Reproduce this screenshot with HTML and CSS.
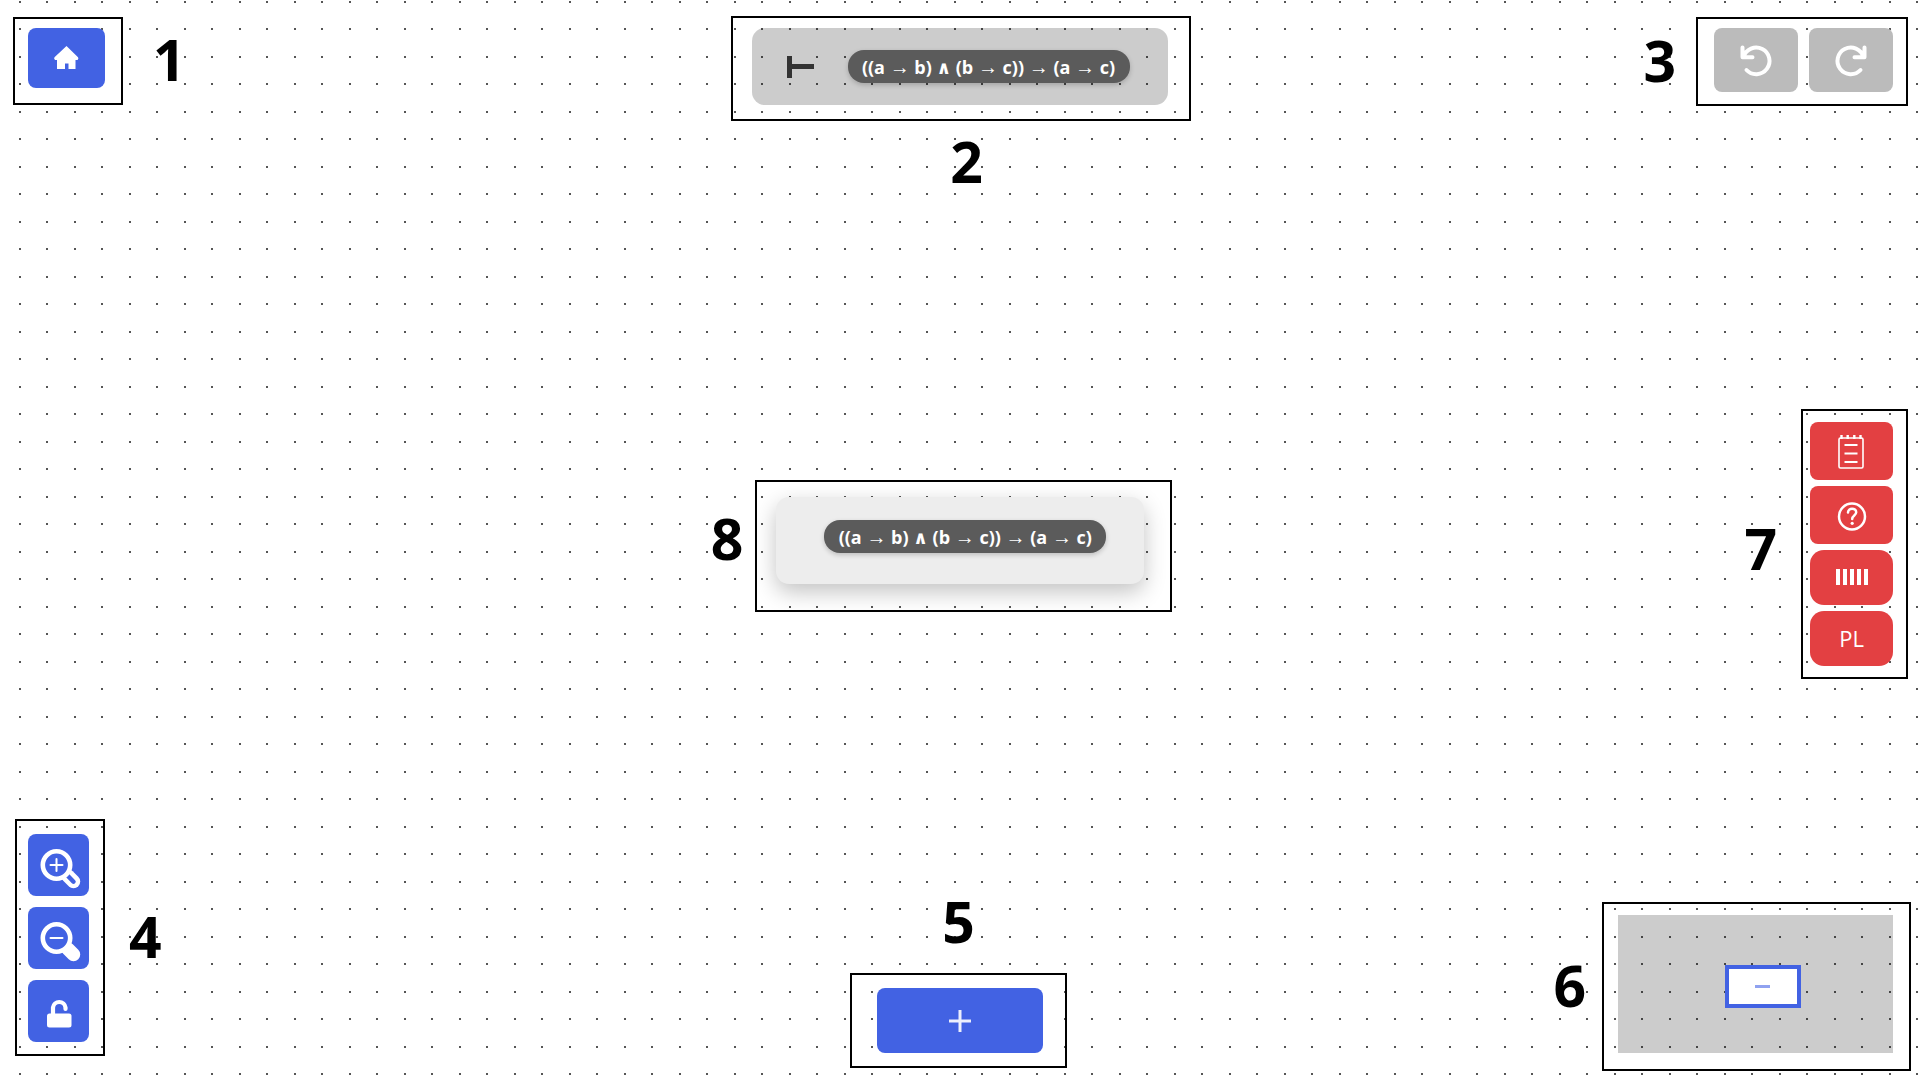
FILE: index.html
```html
<!DOCTYPE html>
<html lang="en">
<head>
<meta charset="utf-8">
<meta name="viewport" content="width=device-width, initial-scale=1">
<title>Proof editor overview</title>
<link rel="stylesheet" href="styles.css">
</head>
<body>
<main class="canvas">
  <div class="row row-top">
    <figure class="figure gap-wide">
      <div class="frame frame-home">
        <button class="btn btn-home" type="button" aria-label="Home">
          <svg width="26" height="24" viewBox="0 0 26 24" fill="#fff"><path d="M12.500 0 24 11.300Q25 12.500 23.600 14H21.500V23H14.500V17.500H11V23H3V14H1Q-.5 12.500 .5 11.300Z"/></svg>
        </button>
      </div>
      <figcaption class="number">1</figcaption>
    </figure>
    <figure class="figure figure-column">
      <div class="frame frame-goal">
        <div class="goal">
          <svg class="turnstile" width="27" height="22" viewBox="0 0 27 22" fill="#333" role="img" aria-label="proves"><path d="M0 0H5V8H27V13H5V22H0Z"/></svg>
          <span class="formula">((a <i>→</i> b) <i class="and">∧</i> (b <i>→</i> c)) <i>→</i> (a <i>→</i> c)</span>
        </div>
      </div>
      <figcaption class="number number-below">2</figcaption>
    </figure>
    <figure class="figure gap-medium">
      <figcaption class="number">3</figcaption>
      <div class="frame frame-history">
        <button class="btn btn-history" type="button" aria-label="Undo">
          <svg width="32" height="32" viewBox="0 0 32 32" class="stroke"><path d="M2.500 3.500V13.300H12.500M3.500 13A13.300 13.300 0 1 1 6.500 26"/></svg>
        </button>
        <button class="btn btn-history" type="button" aria-label="Redo">
          <svg width="32" height="32" viewBox="0 0 32 32" class="stroke"><path d="M29.500 3.500V13.300H19.500M28.500 13A13.300 13.300 0 1 0 25.500 26"/></svg>
        </button>
      </div>
    </figure>
  </div>

  <div class="row row-middle">
    <figure class="figure figure-node gap-narrow">
      <figcaption class="number number-raised">8</figcaption>
      <div class="frame frame-node">
        <div class="node"><span class="formula">((a <i>→</i> b) <i class="and">∧</i> (b <i>→</i> c)) <i>→</i> (a <i>→</i> c)</span></div>
      </div>
    </figure>
    <figure class="figure gap-regular">
      <figcaption class="number number-lowered">7</figcaption>
      <div class="frame frame-tools">
        <button class="btn btn-tool" type="button" aria-label="Rules">
          <svg width="26" height="34" viewBox="1 -1 26 34" fill="none" stroke="#fff"><rect x="1" y="3" width="24" height="30" rx="1.500" stroke-width="1.600"/><path d="M3.500 0V4M9.700 0V4M16.300 0V4M22.500 0V4" stroke-width="2.400"/><path d="M6.500 10H19.500M6.500 18.500H19.500M6.500 27H19.500" stroke-width="2"/></svg>
        </button>
        <button class="btn btn-tool" type="button" aria-label="Help">
          <svg width="30" height="30" viewBox="0 -1 30 30" fill="none" stroke="#fff" stroke-width="2.500" stroke-linecap="round"><circle cx="15" cy="15.500" r="13"/><path d="M11 11.500C11 6.500 19.200 6.500 19.200 11.300C19.200 14.500 15.200 14.500 15.200 18"/><circle cx="15.200" cy="22.300" r="1.600" fill="#fff" stroke="none"/></svg>
        </button>
        <button class="btn btn-tool btn-round" type="button" aria-label="Toggle bars">
          <svg width="32" height="16" viewBox="0 0 32 16" fill="#fff"><path d="M0 0h4v16h-4zM7 0h4v16h-4zM14 0h4v16h-4zM21 0h4v16h-4zM28 0h4v16h-4z"/></svg>
        </button>
        <button class="btn btn-tool btn-round" type="button">PL</button>
      </div>
    </figure>
  </div>

  <div class="row row-bottom">
    <figure class="figure figure-zoom gap-regular">
      <div class="frame frame-zoom">
        <button class="btn btn-square" type="button" aria-label="Zoom in">
          <svg width="44" height="44" viewBox="1 0 44 44" class="lens"><path d="M32 33 37.500 38.500" stroke="#fff" stroke-width="13.500"/><path d="M31.500 32.500 37.500 38.700" stroke="#4262e3" stroke-width="4.500"/><circle cx="20.500" cy="22" r="13.700" fill="#4262e3" stroke="#fff" stroke-width="4.600"/><path d="M14.500 22H26.500M20.500 16V28" stroke="#fff" stroke-width="2"/></svg>
        </button>
        <button class="btn btn-square" type="button" aria-label="Zoom out">
          <svg width="44" height="44" viewBox="1 0 44 44" class="lens"><path d="M32 33 37.500 38.500" stroke="#fff" stroke-width="13.500"/><circle cx="20.500" cy="22" r="13.700" fill="#4262e3" stroke="#fff" stroke-width="4.600"/><path d="M14.500 22H26.500" stroke="#fff" stroke-width="2"/></svg>
        </button>
        <button class="btn btn-square" type="button" aria-label="Unlock">
          <svg width="26" height="34" viewBox="0 0 26 34"><rect x="1" y="19.500" width="24.500" height="14" rx="2.500" fill="#fff"/><path d="M7 21V13.500A6.300 6.300 0 0 1 19.500 13.500V15" fill="none" stroke="#fff" stroke-width="4.200" stroke-linecap="round"/></svg>
        </button>
      </div>
      <figcaption class="number">4</figcaption>
    </figure>
    <figure class="figure figure-column figure-add">
      <figcaption class="number number-above">5</figcaption>
      <div class="frame frame-add">
        <button class="btn btn-add" type="button" aria-label="Add node">
          <svg width="22" height="22" viewBox="0 0 22 22" fill="#fff" opacity=".9"><path d="M9.500 0h3v9.500H22v3H12.500V22h-3V12.500H0v-3H9.500z"/></svg>
        </button>
      </div>
    </figure>
    <figure class="figure gap-small">
      <figcaption class="number">6</figcaption>
      <div class="frame frame-map">
        <div class="map"><div class="viewport"><div class="map-node"></div></div></div>
      </div>
    </figure>
  </div>
</main>
</body>
</html>
```
FILE: styles.css
```css
* {
  box-sizing: border-box;
}

body {
  margin: 0;
  font-family: "Open Sans", "Noto Sans", sans-serif;
  color: #000;
}

/* Dots repeat every 55px in pairs, four per tile */
.canvas {
  --dot: radial-gradient(circle at 1px 1px, #555 1px, transparent 1px);
  display: grid;
  grid-template-rows: 1fr auto 1fr;
  min-height: 100vh;
  padding: 16px 11px 8px 13px;
  background-color: #fff;
  background-image: var(--dot), var(--dot), var(--dot), var(--dot);
  background-size: 55px 55px;
  background-position: 19px 1px, 46px 1px, 19px 28px, 46px 28px;
}

.row {
  display: grid;
  grid-template-columns: 1fr auto 1fr;
}

.row-top {
  align-items: start;
}

.row-middle {
  align-items: center;
}

.row-bottom {
  align-items: end;
}

.row > :last-child {
  justify-self: end;
}

.figure {
  display: flex;
  align-items: center;
  margin: 0;
}

.figure-column {
  flex-direction: column;
}

.row-top .figure:not(.figure-column) {
  padding-top: 1px;
}

.figure-node {
  grid-column: 2;
  padding: 4px 38px 0 0;
}

.figure-zoom {
  padding: 0 0 15px 2px;
  justify-self: start;
}

.figure-add {
  padding: 0 4px 3px 0;
}

.row-bottom .figure:last-child {
  margin-right: -3px;
}

.gap-wide { gap: 30px; }
.gap-regular { gap: 24px; }
.gap-medium { gap: 20px; }
.gap-small { gap: 16px; }
.gap-narrow { gap: 12px; }

.number {
  padding-bottom: 4px;
  font-size: 57px;
  font-weight: 700;
  line-height: 56px;
}

.number-below {
  padding: 12px 0 0 12px;
}

.number-above {
  padding-bottom: 24px;
}

.number-raised {
  padding-bottom: 16px;
}

.number-lowered {
  padding: 8px 0 0;
}

.frame {
  border: 2px solid #000;
}

.frame-home { padding: 9px 16px 15px 13px; }
.frame-goal { padding: 10px 21px 14px 19px; }
.frame-node { padding: 15px 26px 26px 19px; }
.frame-map { padding: 11px 16px 16px 14px; }
.frame-add { padding: 13px 22px 13px 25px; }

.frame-history {
  display: flex;
  gap: 11px;
  padding: 9px 13px 12px 16px;
}

.frame-tools {
  display: flex;
  flex-direction: column;
  gap: 6px;
  padding: 11px 13px 11px 7px;
}

.frame-zoom {
  display: flex;
  flex-direction: column;
  gap: 11px;
  padding: 13px 14px 12px 11px;
}

.btn {
  display: grid;
  place-items: center;
  padding: 0;
  border: 0;
  border-radius: 8px;
  background: #4262e3;
  color: #fff;
  font: 22px/28px "Open Sans", "Noto Sans", sans-serif;
  cursor: pointer;
}

.btn svg {
  display: block;
  overflow: visible;
}

.btn-home {
  width: 77px;
  height: 60px;
}

.btn-history {
  width: 84px;
  height: 64px;
  background: #bbb;
}

.btn-tool {
  width: 83px;
  height: 58px;
  background: #e34042;
}

.btn-round {
  height: 55px;
  border-radius: 14px;
}

.btn-square {
  width: 61px;
  height: 62px;
}

.btn-add {
  width: 166px;
  height: 65px;
}

.stroke {
  fill: none;
  stroke: #fff;
  stroke-width: 4;
  stroke-linecap: round;
  stroke-linejoin: round;
}

.lens {
  fill: none;
  stroke-linecap: round;
}

.goal {
  display: flex;
  align-items: center;
  gap: 34px;
  height: 77px;
  padding: 0 38px 0 35px;
  border-radius: 13px;
  background: rgb(0 0 0 / 20%);
}

.formula {
  display: block;
  width: 282px;
  height: 33px;
  border-radius: 16px;
  background: #5b5b5b;
  box-shadow: 0 2px 5px rgb(0 0 0 / 20%);
  color: #fff;
  font-size: 18px;
  font-weight: 700;
  line-height: 35px;
  text-align: center;
  white-space: nowrap;
}

.formula i {
  font-family: "Liberation Sans", sans-serif;
  font-size: 20px;
  font-style: normal;
  font-weight: 400;
  line-height: 1;
}

.formula .and {
  font-family: "DejaVu Sans", sans-serif;
  font-size: 18px;
  font-weight: 700;
}

.node {
  height: 87px;
  padding: 23px 38px 0 48px;
  border-radius: 13px;
  background: #ededed;
  box-shadow: 0 8px 22px rgb(0 0 0 / 24%);
}

.map {
  display: grid;
  place-items: center;
  width: 275px;
  height: 138px;
  padding: 4px 0 0 14px;
  background: rgb(0 0 0 / 20%);
}

.viewport {
  display: grid;
  place-items: center;
  width: 76px;
  height: 43px;
  border: 4px solid #4262e3;
  background: #fff;
}

.map-node {
  width: 15px;
  height: 3px;
  background: #90a2f0;
}
```
